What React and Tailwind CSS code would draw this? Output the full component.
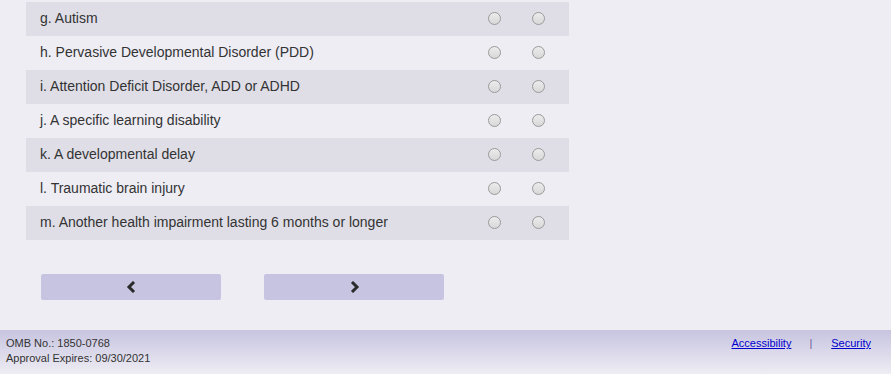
const rows = [
  "g. Autism",
  "h. Pervasive Developmental Disorder (PDD)",
  "i. Attention Deficit Disorder, ADD or ADHD",
  "j. A specific learning disability",
  "k. A developmental delay",
  "l. Traumatic brain injury",
  "m. Another health impairment lasting 6 months or longer",
];

const Radio = () => (
  <span className="block w-[13px] h-[13px] rounded-full border border-[#9a9a9a] bg-gradient-to-b from-[#ececec] to-[#d8d8d8]" />
);

export default function App() {
  return (
    <div className="min-h-[374px] bg-[#eeedf3] font-['Liberation_Sans',Arial,sans-serif] text-[#333] flex flex-col">
      <div className="pt-[2px] pl-[26px]">
        <div className="w-[543px]">
          {rows.map((r, i) => (
            <div
              key={r}
              className={`h-[34px] flex items-center pl-[14px] text-[14px] ${i % 2 === 0 ? "bg-[#dfdee7]" : ""}`}
            >
              <span className="flex-1 pb-[2px]">{r}</span>
              <div className="flex gap-[31px] pr-[24px] pb-[1px]">
                <Radio />
                <Radio />
              </div>
            </div>
          ))}
        </div>
        <div className="flex gap-[43px] pl-[15px] mt-[34px]">
          <button className="w-[180px] h-[26px] bg-[#c7c4e1] rounded-[2px] flex items-center justify-center">
            <svg width="11" height="12" viewBox="0 0 11 12">
              <path d="M8 1 L3 6 L8 11" stroke="#2a2a2a" strokeWidth="3" fill="none" />
            </svg>
          </button>
          <button className="w-[180px] h-[26px] bg-[#c7c4e1] rounded-[2px] flex items-center justify-center">
            <svg width="11" height="12" viewBox="0 0 11 12">
              <path d="M3 1 L8 6 L3 11" stroke="#2a2a2a" strokeWidth="3" fill="none" />
            </svg>
          </button>
        </div>
      </div>
      <footer className="mt-[30px] h-[44px] bg-gradient-to-b from-[#c7c4e0] to-[#eeedf3] flex justify-between px-[6px] pt-[6px] text-[11px] leading-[15px]">
        <div>
          <div>OMB No.: 1850-0768</div>
          <div>Approval Expires: 09/30/2021</div>
        </div>
        <div className="flex pr-[14px]">
          <a href="#" className="underline text-[#0000cc]">Accessibility</a>
          <span className="ml-[18px] mr-[19px] text-[#6c5f9e]">|</span>
          <a href="#" className="underline text-[#0000cc]">Security</a>
        </div>
      </footer>
    </div>
  );
}
